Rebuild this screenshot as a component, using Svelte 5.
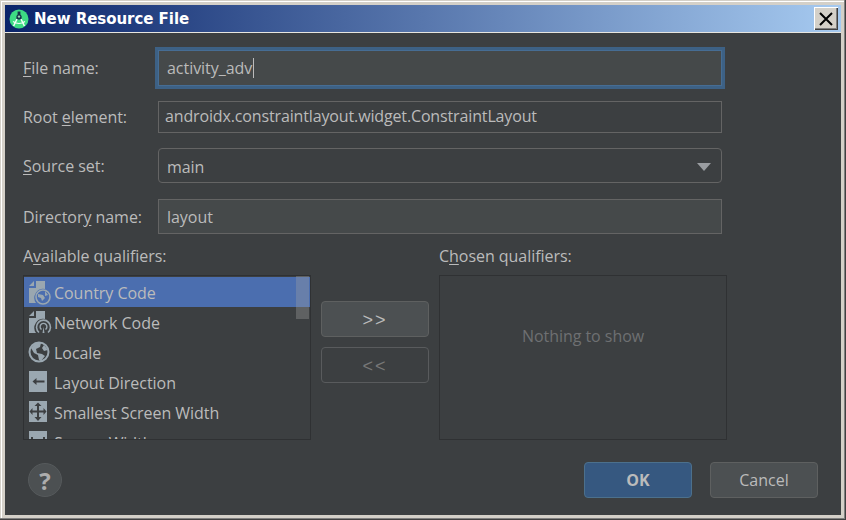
<script>
  const rows = [
    { label: 'Country Code', icon: 'country', selected: true },
    { label: 'Network Code', icon: 'network' },
    { label: 'Locale', icon: 'locale' },
    { label: 'Layout Direction', icon: 'direction' },
    { label: 'Smallest Screen Width', icon: 'smallest' },
    { label: 'Screen Width', icon: 'width' }
  ];
</script>

<div class="window">
  <header class="titlebar">
    <svg class="logo" width="20" height="20" viewBox="0 0 20 20" aria-hidden="true">
      <circle cx="10" cy="10" r="9.5" fill="#3ddc84" />
      <path d="M8.600 2.500h2.800v3l1.200 1.600v3.400H7.400V7.100l1.200-1.600z" fill="#17324a" />
      <circle cx="10" cy="7.600" r="1.200" fill="#8fd8b0" />
      <path d="M8 10l-3.400 7M12 10l3.400 7" stroke="#f2fff8" stroke-width="1.500" fill="none" />
      <path d="M4 12.600c3.500 2.400 8.500 2.400 12 0" stroke="#f2fff8" stroke-width="1.200" fill="none" />
    </svg>
    <span class="title">New Resource File</span>
    <button class="close" aria-label="Close">
      <svg width="14" height="14" viewBox="0 0 14 14"><path d="M1 1l12 12M13 1L1 13" stroke="#000" stroke-width="2" fill="none" /></svg>
    </button>
  </header>

  <main class="dialog">
    <div class="form-row row-name">
      <label><u>F</u>ile name:</label>
      <div class="field focused">activity_adv<i class="caret"></i></div>
    </div>
    <div class="form-row row-root">
      <label>Root <u>e</u>lement:</label>
      <div class="field"><span class="value">androidx.constraintlayout.widget.ConstraintLayout</span></div>
    </div>
    <div class="form-row row-source">
      <label><u>S</u>ource set:</label>
      <div class="field combo">main<i class="arrow"></i></div>
    </div>
    <div class="form-row row-dir">
      <label>Director<u>y</u> name:</label>
      <div class="field readonly">layout</div>
    </div>

    <div class="qualifiers">
      <section class="column">
        <h2>A<u>v</u>ailable qualifiers:</h2>
        <div class="list">
          {#each rows as row}
            <div class="row" class:selected={row.selected}>
              <svg class="icon" width="26" height="26" viewBox="0 0 26 26" aria-hidden="true">
                {#if row.icon === 'country' || row.icon === 'network'}
                  <path d="M3 7l5-5v5zM10 2h9v8a9 9 0 0 0-9 14H3V9h7z" fill="#9aa7b0" />
                  {#if row.icon === 'country'}
                    <circle cx="17" cy="18" r="7" fill="none" stroke="#9aa7b0" stroke-width="1.600" />
                    <path d="M12 15l5 1 2 3-3 3-1-3-3-1zM19 12l3 4-3 1z" fill="#9aa7b0" />
                  {:else}
                    <path d="M13 23.500a7 7 0 1 1 9 0" fill="none" stroke="#9aa7b0" stroke-width="1.600" />
                    <path d="M15.500 20.500a3.400 3.400 0 1 1 4 0" fill="none" stroke="#9aa7b0" stroke-width="1.400" />
                    <path d="M16.500 24l1-6 1 6z" fill="#9aa7b0" />
                  {/if}
                {:else if row.icon === 'locale'}
                  <circle cx="13" cy="13" r="9.500" fill="none" stroke="#9aa7b0" stroke-width="2" />
                  <path d="M5 9l4-5 6 0-1 4-4 2 1 4 5 1 3 2-4 5-2-1-1-5-4-2zM18 6l4 5-4 1-2-3z" fill="#9aa7b0" />
                {:else}
                  <rect x="3" y="2" width="18" height="21" fill="#9aa7b0" />
                  {#if row.icon === 'direction'}
                    <path d="M6.500 12.500L10.500 9v2.500h8v2h-8V16z" fill="#3c3f41" />
                  {:else if row.icon === 'smallest'}
                    <path d="M12 3.500l3.500 3.500h-2.500v4.500h4.500V9l3 3.500-3 3.500v-2.500H13V18h2.500L12 22l-3.500-4H11v-4.500H6.500V16l-3-3.500 3-3.500v2.500H11V7H8.500z" fill="#3c3f41" />
                  {:else}
                    <path d="M6 8v9M18 8v9M7 12.500h10" stroke="#3c3f41" stroke-width="2" />
                  {/if}
                {/if}
              </svg>
              <span>{row.label}</span>
            </div>
          {/each}
          <div class="thumb"></div>
        </div>
      </section>

      <div class="shuttle">
        <button class="btn arrows">&gt;&gt;</button>
        <button class="btn arrows off">&lt;&lt;</button>
      </div>

      <section class="column">
        <h2>C<u>h</u>osen qualifiers:</h2>
        <div class="list empty">Nothing to show</div>
      </section>
    </div>

    <footer class="actions">
      <button class="help" aria-label="Help">?</button>
      <button class="btn primary">OK</button>
      <button class="btn cancel">Cancel</button>
    </footer>
  </main>
</div>

<style>
  :global(body) {
    margin: 0;
    background: #d4d0c8;
  }

  .window {
    display: flex;
    flex-direction: column;
    box-sizing: border-box;
    width: 846px;
    height: 520px;
    padding: 5px 5px 5px;
    background: #d4d0c8;
    box-shadow: inset -1px -1px 0 #404040, inset -2px -2px 0 #808080, inset 1px 1px 0 #d4d0c8, inset 2px 2px 0 #fff;
    font: 16px/22px 'Open Sans', sans-serif;
    letter-spacing: -0.04px;
    color: #bbbbbb;
  }

  .titlebar {
    display: flex;
    flex: 0 0 27px;
    align-items: center;
    padding: 0 3px 0 4px;
    background: linear-gradient(90deg, #0a246a, #a6caf0);
    color: #fff;
  }

  .logo {
    flex: none;
    margin-right: 5px;
  }

  .title {
    flex: 1;
    font: bold 15px 'DejaVu Sans', sans-serif;
  }

  .close {
    display: grid;
    width: 24px;
    height: 23px;
    padding: 0;
    place-items: center;
    border: 0;
    background: #d4d0c8;
    box-shadow: inset 1px 1px 0 #fff, inset -1px -1px 0 #404040, inset -2px -2px 0 #808080;
  }

  .dialog {
    display: flex;
    flex: 1;
    flex-direction: column;
    min-height: 0;
    margin-top: 1px;
    padding: 17px 23px 17px 18px;
    background: #3c3f41;
    box-shadow: 0 -1px 0 #e8e6e0;
  }

  .form-row {
    display: grid;
    grid-template-columns: 135px 564px;
    align-items: center;
  }

  .row-root { margin-top: 15px; }
  .row-source { margin-top: 15px; }
  .row-dir { margin-top: 16px; }

  label u, h2 u {
    text-underline-offset: 2px;
  }

  .field {
    position: relative;
    display: flex;
    box-sizing: border-box;
    align-items: center;
    height: 35px;
    padding: 0 8px;
    border: 1px solid #646464;
    background: #45494a;
  }

  .row-name .field { height: 36px; }

  .row-root .field {
    height: 32px;
    padding: 0 6px 2px;
    background: #3c3f41;
  }

  .value {
    letter-spacing: -0.14px;
  }

  .focused {
    border-color: #466d94;
    outline: 3px solid #3d6185;
    background: #45494a;
  }

  .caret {
    width: 1px;
    height: 20px;
    margin-left: 1px;
    background: #bbbbbb;
  }

  .combo {
    padding-top: 2px;
    border-radius: 4px;
    background: #3c3f41;
  }

  .arrow {
    position: absolute;
    right: 10px;
    top: 14px;
    border: 7px solid transparent;
    border-top: 8px solid #9a9da1;
    border-bottom: 0;
  }

  .qualifiers {
    display: flex;
    align-items: flex-start;
    margin-top: 11px;
  }

  .column {
    width: 288px;
  }

  h2 {
    height: 30px;
    margin: 0;
    font: inherit;
    line-height: 22px;
  }

  .list {
    position: relative;
    box-sizing: border-box;
    height: 165px;
    overflow: hidden;
    padding-top: 1px;
    border: 1px solid #2f3133;
    background: #3c3f41;
  }

  .row {
    display: flex;
    align-items: center;
    height: 30px;
    padding-left: 2px;
    color: #bbbbbb;
  }

  .row span {
    padding-top: 2px;
  }

  .row.selected {
    background: #4b6eaf;
  }

  .icon {
    flex: none;
    width: 26px;
    margin-right: 2px;
  }

  .thumb {
    position: absolute;
    top: 0;
    right: 1px;
    width: 13px;
    height: 43px;
    background: rgba(160, 160, 160, 0.35);
  }

  .empty {
    display: grid;
    place-items: center;
    padding-bottom: 44px;
    color: #6e7072;
  }

  .shuttle {
    display: flex;
    flex-direction: column;
    gap: 10px;
    margin: 56px 10px 0;
  }

  .btn {
    box-sizing: border-box;
    width: 108px;
    height: 36px;
    padding: 0;
    border: 1px solid #5e6060;
    border-radius: 4px;
    background: #4c5052;
    color: #bbbbbb;
    font: inherit;
  }

  .arrows {
    padding-top: 2px;
    font-family: 'Liberation Sans', sans-serif;
    font-size: 18px;
    letter-spacing: 2px;
  }

  .btn.off {
    background: #3c3f41;
    color: #777777;
    border-color: #595b5d;
  }

  .actions {
    display: flex;
    align-items: center;
    margin-top: 22px;
  }

  .help {
    display: grid;
    width: 34px;
    height: 34px;
    margin-left: 5px;
    padding: 0 0 2px;
    place-items: center;
    border: 1px solid #565a5c;
    border-radius: 50%;
    background: #4c5052;
    color: #adadad;
    font: 700 24px 'Open Sans', sans-serif;
  }

  .primary {
    margin-left: auto;
    border-color: #4c708c;
    background: #365880;
    font-weight: bold;
  }

  .cancel {
    margin-left: 18px;
  }
</style>
